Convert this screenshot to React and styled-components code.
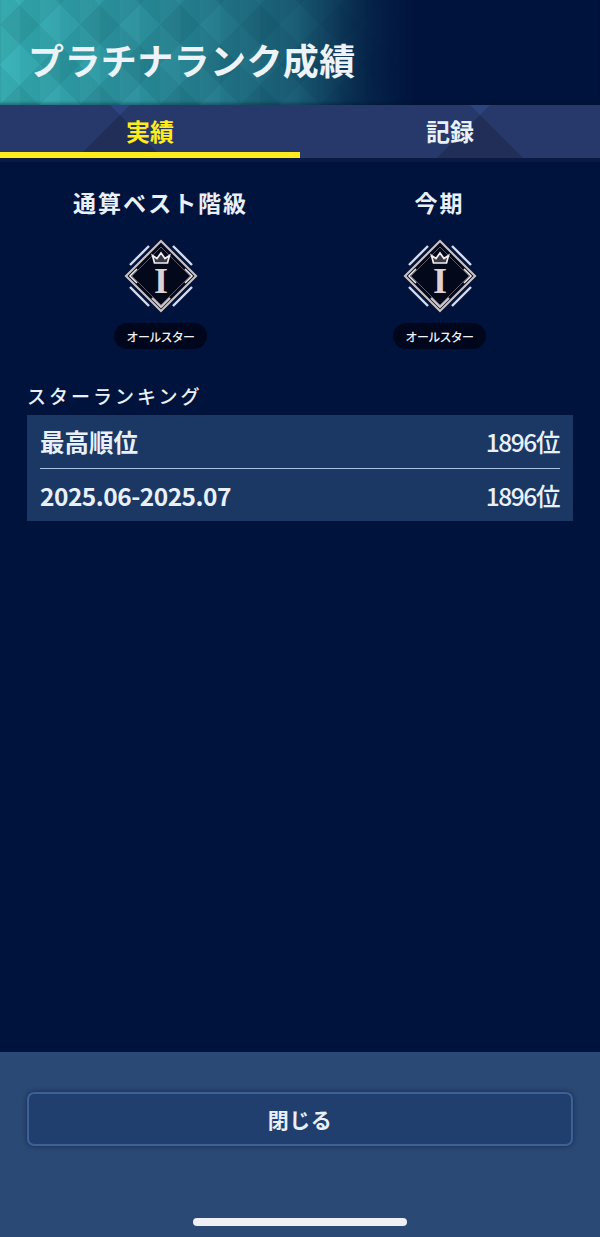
import React from 'react';
import styled, { createGlobalStyle } from 'styled-components';

const font = `"Noto Sans CJK JP", "Noto Sans", sans-serif`;

const GlobalStyle = createGlobalStyle`
  html, body {
    margin: 0;
    padding: 0;
    background: #00133c;
  }
  body {
    font-family: ${font};
    color: #e9f0fa;
  }
`;

const RankBadge = () => (
  <BadgeSvg viewBox="0 0 80 80">
    <path d="M40 3 L77 40 L40 77 L3 40 Z" fill="#03081a" />
    <path d="M40 5 L75 40 L40 75 L5 40 Z" fill="none" stroke="#c8c0c4" strokeWidth="2.2" />
    <path d="M40 11 L69 40 L40 69 L11 40 Z" fill="none" stroke="#5d5a66" strokeWidth="1" />
    <g fill="none" stroke="#d4dcec" strokeWidth="2.4">
      <path d="M52 10 L71 29" />
      <path d="M28 10 L9 29" />
      <path d="M52 70 L71 51" />
      <path d="M28 70 L9 51" />
    </g>
    <g fill="none" stroke="#efecee" strokeWidth="1.6">
      <path d="M16 33 L9 40 L16 47" />
      <path d="M64 33 L71 40 L64 47" />
    </g>
    <path d="M31 62 L40 71 L49 62" fill="none" stroke="#cfc8cb" strokeWidth="2.2" />
    <path
      d="M33.5 27 L31.5 19.5 L36 22.5 L40 17 L44 22.5 L48.5 19.5 L46.5 27 Z"
      fill="#3a3a46"
      stroke="#f2eff1"
      strokeWidth="1.7"
    />
    <BadgeLetter x="40" y="56.5" textAnchor="middle">I</BadgeLetter>
  </BadgeSvg>
);

const App = () => (
  <>
    <GlobalStyle />
    <Page>
      <Header>
        <Title>プラチナランク成績</Title>
      </Header>
      <Tabs>
        <Tab $mark={120}>
          <TabLabel $active>実績</TabLabel>
          <TabBar />
        </Tab>
        <Tab $mark={180}>
          <TabLabel>記録</TabLabel>
        </Tab>
      </Tabs>
      <Content>
        <Ranks>
          <RankColumn>
            <RankHeading>通算ベスト階級</RankHeading>
            <RankBadge />
            <RankPill>オールスター</RankPill>
          </RankColumn>
          <RankColumn>
            <RankHeading>今期</RankHeading>
            <RankBadge />
            <RankPill>オールスター</RankPill>
          </RankColumn>
        </Ranks>
        <SectionLabel>スターランキング</SectionLabel>
        <Table>
          <Row $divided>
            <RowLabel>最高順位</RowLabel>
            <RowValue>1896位</RowValue>
          </Row>
          <Row>
            <RowLabel $tight>2025.06-2025.07</RowLabel>
            <RowValue>1896位</RowValue>
          </Row>
        </Table>
      </Content>
      <Footer>
        <CloseButton>閉じる</CloseButton>
        <HomeBar />
      </Footer>
    </Page>
  </>
);

const Page = styled.div`
  width: 600px;
  height: 1237px;
  display: flex;
  flex-direction: column;
  overflow: hidden;
  background: #00133c;
`;

const Header = styled.header`
  height: 105px;
  box-sizing: border-box;
  padding: 35px 0 0 28px;
  box-shadow: inset 0 -3px 3px -1px rgba(0, 20, 40, 0.35);
  background:
    linear-gradient(90deg, rgba(0, 19, 60, 0) 0, rgba(0, 19, 60, 0.3) 200px, rgba(0, 19, 60, 0.55) 300px, rgba(0, 19, 60, 0.9) 370px, #00133c 415px),
    repeating-linear-gradient(90deg, rgba(255, 255, 255, 0.025) 0 20px, rgba(0, 0, 0, 0.02) 20px 40px),
    repeating-linear-gradient(45deg, rgba(0, 0, 0, 0.05) 0 28.28px, rgba(255, 255, 255, 0.015) 28.28px 56.57px),
    repeating-linear-gradient(-45deg, rgba(0, 0, 0, 0.05) 0 28.28px, rgba(255, 255, 255, 0.015) 28.28px 56.57px),
    #31b0b5;
`;

const Title = styled.h1`
  margin: 0;
  font-size: 36px;
  line-height: 48px;
  font-weight: 700;
  color: #edf3f8;
  letter-spacing: 0.4px;
  white-space: nowrap;
`;

const Tabs = styled.nav`
  height: 57px;
  box-sizing: border-box;
  display: flex;
  background: #27396a;
  border-bottom: 4px solid #0a1a42;
`;

const Tab = styled.div`
  position: relative;
  flex: 1;
  display: flex;
  align-items: center;
  justify-content: center;
  padding-bottom: 3px;
  box-sizing: border-box;
  overflow: hidden;
  &::before {
    content: '';
    position: absolute;
    top: 10px;
    left: ${props => props.$mark - 43}px;
    width: 86px;
    height: 43px;
    background: #212f58;
    clip-path: polygon(50% 0, 100% 100%, 0 100%);
  }
  &::after {
    content: '';
    position: absolute;
    top: 0;
    left: ${props => props.$mark - 10}px;
    width: 20px;
    height: 10px;
    background: #2c4480;
    clip-path: polygon(0 0, 100% 0, 50% 100%);
  }
`;

const TabLabel = styled.span`
  position: relative;
  z-index: 1;
  font-size: 24px;
  font-weight: 700;
  color: ${props => props.$active ? '#ffec1a' : '#e9f0fa'};
`;

const TabBar = styled.div`
  position: absolute;
  z-index: 1;
  left: 0;
  right: 0;
  bottom: 0;
  height: 6px;
  background: #ffec1a;
`;

const Content = styled.main`
  flex: 1;
  padding: 0 27px;
`;

const Ranks = styled.div`
  display: flex;
  margin: 23px -6px 0;
`;

const RankColumn = styled.div`
  flex: 1;
  display: flex;
  flex-direction: column;
  align-items: center;
`;

const RankHeading = styled.h2`
  margin: 0 0 17px;
  font-size: 23px;
  line-height: 34px;
  font-weight: 700;
  letter-spacing: 1.9px;
`;

const BadgeSvg = styled.svg`
  width: 80px;
  height: 80px;
  display: block;
`;

const BadgeLetter = styled.text`
  font-family: "Liberation Serif", serif;
  font-size: 36px;
  font-weight: 700;
  fill: #ddd3d4;
`;

const RankPill = styled.div`
  margin-top: 7px;
  width: 93px;
  height: 26px;
  border-radius: 13px;
  background: #00071c;
  color: #f1f3f7;
  font-size: 12px;
  font-weight: 500;
  letter-spacing: -0.7px;
  display: flex;
  align-items: center;
  justify-content: center;
`;

const SectionLabel = styled.div`
  margin-top: 33px;
  font-size: 19px;
  line-height: 28px;
  font-weight: 500;
  letter-spacing: 3px;
`;

const Table = styled.div`
  margin-top: 5px;
  background: #1a3863;
  padding: 0 13px;
`;

const Row = styled.div`
  height: ${props => props.$divided ? '54px' : '52px'};
  box-sizing: border-box;
  display: flex;
  align-items: center;
  justify-content: space-between;
  border-bottom: ${props => props.$divided ? '1px solid #a9c3e2' : 'none'};
`;

const RowLabel = styled.span`
  font-size: 24.5px;
  font-weight: 700;
  letter-spacing: ${props => props.$tight ? '-0.5px' : '0'};
`;

const RowValue = styled.span`
  font-size: 24.5px;
  font-weight: 500;
  letter-spacing: -1.4px;
  margin-right: 1px;
`;

const Footer = styled.footer`
  height: 185px;
  display: flex;
  flex-direction: column;
  align-items: center;
  background: #2b4975;
  padding: 40px 27px 0;
  box-sizing: border-box;
`;

const CloseButton = styled.button`
  width: 100%;
  height: 54px;
  box-sizing: border-box;
  border: 2px solid #3f6095;
  border-radius: 7px;
  background: #203f6e;
  box-shadow: 0 0 5px rgba(5, 20, 50, 0.6);
  color: #e9f0fa;
  font-family: ${font};
  font-size: 21px;
  font-weight: 700;
  letter-spacing: 0.5px;
`;

const HomeBar = styled.div`
  width: 214px;
  height: 8px;
  margin-top: 72px;
  border-radius: 4px;
  background: #eef0f5;
`;

export default App;
